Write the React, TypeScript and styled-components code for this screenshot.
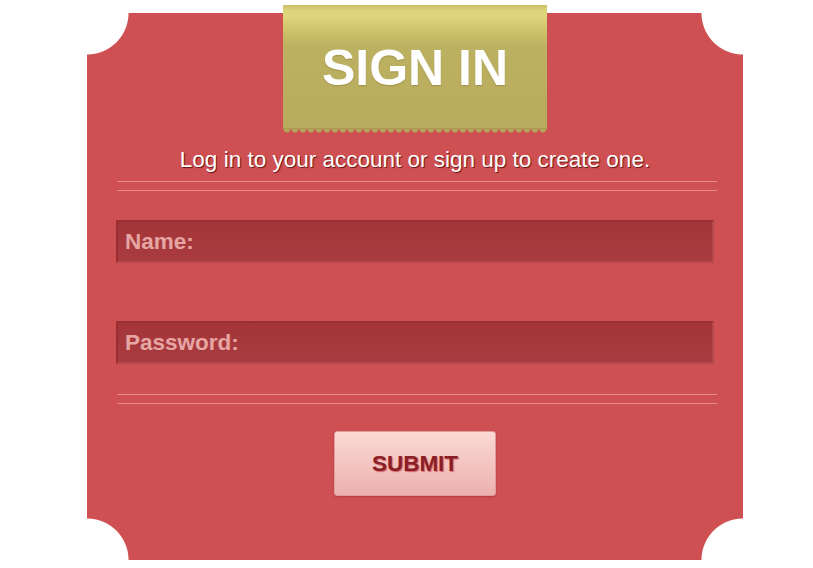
import React from "react";
import styled, { createGlobalStyle } from "styled-components";

const Global = createGlobalStyle`
  html, body { margin: 0; padding: 0; background: #ffffff; }
  body { font-family: "Liberation Sans", Arial, sans-serif; }
  * { box-sizing: border-box; }
`;

const Page = styled.div`
  width: 813px;
  height: 568px;
  padding: 13px 0 0 87px;
  overflow: hidden;
`;

const NOTCH = 41;
const RED = "#cf5052";

/* Ticket-shaped card: each quadrant is painted with a radial gradient
   that leaves a round bite out of its corner. */
const Card = styled.form`
  width: 656px;
  height: 547px;
  padding: 0 28px;
  display: flex;
  flex-direction: column;
  align-items: stretch;
  background:
    radial-gradient(circle at 0 0, transparent ${NOTCH}px, ${RED} ${NOTCH + 1}px) top left / 330px 276px no-repeat,
    radial-gradient(circle at 100% 0, transparent ${NOTCH}px, ${RED} ${NOTCH + 1}px) top right / 330px 276px no-repeat,
    radial-gradient(circle at 0 100%, transparent ${NOTCH}px, ${RED} ${NOTCH + 1}px) bottom left / 330px 276px no-repeat,
    radial-gradient(circle at 100% 100%, transparent ${NOTCH}px, ${RED} ${NOTCH + 1}px) bottom right / 330px 276px no-repeat;
`;

const Ribbon = styled.div`
  align-self: center;
  margin-top: -8px;
  width: 264px;
  display: flex;
  flex-direction: column;
`;

const RibbonBody = styled.div`
  height: 124px;
  display: flex;
  align-items: center;
  justify-content: center;
  padding-top: 2px;
  background: linear-gradient(
    to bottom,
    #cabe68 0px,
    #dcd27a 5px,
    #e0d67e 11px,
    #cbbf68 28px,
    #bcb061 42px,
    #b8ab5d 100%
  );
  border-bottom: 1px solid #a89a4e;
`;

const Scallops = styled.div`
  height: 6px;
  background: radial-gradient(circle at 50% 0, #b2a557 3.2px, transparent 3.8px) 0 0 / 8px 6px repeat-x;
`;

const Title = styled.h1`
  margin: 0;
  font-family: "Liberation Sans", Arial, sans-serif;
  font-weight: bold;
  font-size: 50px;
  line-height: 1;
  color: #ffffff;
  text-shadow: 0 1px 1px rgba(110, 96, 30, 0.35);
`;

const Lead = styled.p`
  margin: 12px 0 0;
  text-align: center;
  font-size: 22.5px;
  line-height: 26px;
  color: #ffffff;
  text-shadow: 1px 1px 1px rgba(60, 0, 0, 0.75);
`;

const Rule = styled.div<{ $top: number }>`
  margin: ${(p) => p.$top}px -2px 0 2px;
  height: 10px;
  border-top: 1px solid #e58c88;
  border-bottom: 1px solid #e58c88;
`;

const Field = styled.label<{ $top: number }>`
  margin: ${(p) => p.$top}px 1px 0;
  height: 43px;
  display: flex;
  align-items: center;
  padding: 0 7px;
  background: linear-gradient(to bottom, #a43539, #a93c40);
  border: 2px solid #982f33;
  border-right-color: #b5484b;
  border-bottom-color: #b5484b;
  font-size: 22.5px;
  font-weight: bold;
  color: #e6a6a4;
  cursor: text;
`;

const Submit = styled.button`
  align-self: center;
  margin-top: 27px;
  width: 162px;
  height: 65px;
  border: 1px solid #e19d99;
  border-radius: 3px;
  background: linear-gradient(to bottom, #fbd8d5 0%, #f3c3c0 55%, #ecb1ae 100%);
  box-shadow: 0 1px 2px rgba(120, 20, 20, 0.35);
  font-family: "Liberation Sans", Arial, sans-serif;
  font-size: 22.5px;
  font-weight: bold;
  color: #8a1f27;
  text-shadow: 1px 1px 1px rgba(200, 60, 70, 0.7);
  cursor: pointer;
`;

export default function App() {
  return (
    <>
      <Global />
      <Page>
        <Card onSubmit={(e) => e.preventDefault()}>
          <Ribbon>
            <RibbonBody>
              <Title>SIGN IN</Title>
            </RibbonBody>
            <Scallops />
          </Ribbon>
          <Lead>Log in to your account or sign up to create one.</Lead>
          <Rule $top={8} />
          <Field $top={29}>Name:</Field>
          <Field $top={58}>Password:</Field>
          <Rule $top={30} />
          <Submit type="submit">SUBMIT</Submit>
        </Card>
      </Page>
    </>
  );
}
